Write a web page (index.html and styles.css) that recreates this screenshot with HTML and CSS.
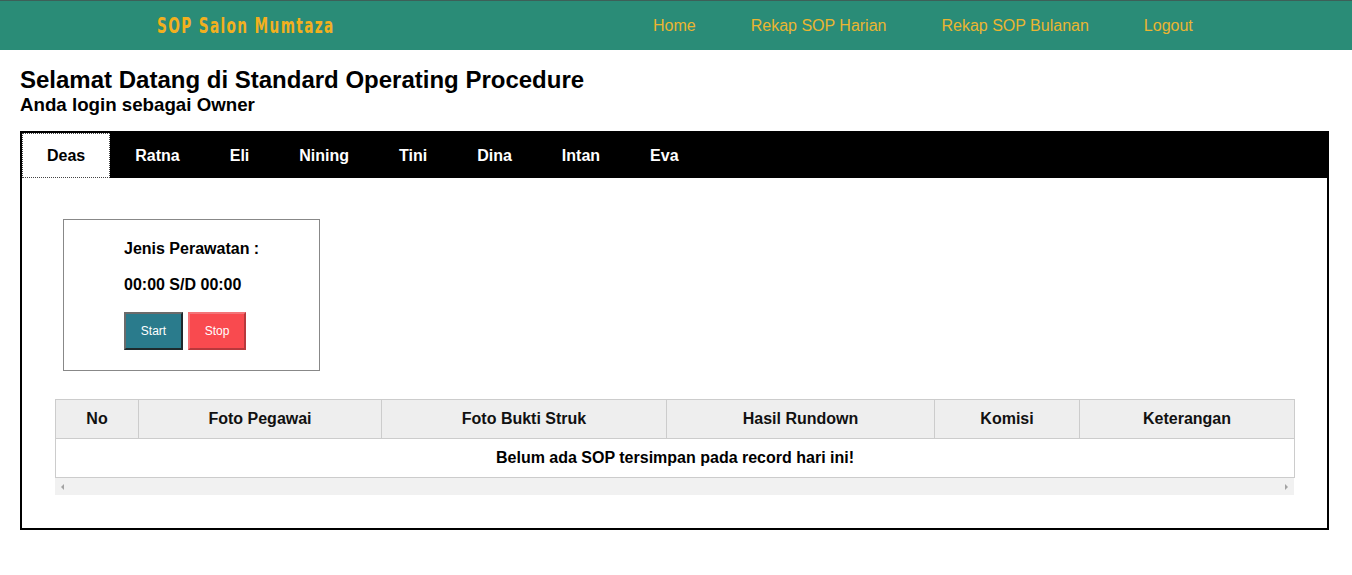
FILE: index.html
```html
<!DOCTYPE html>
<html>
<head>
<meta charset="utf-8">
<link rel="stylesheet" href="styles.css">
</head>
<body>
<header class="topbar">
  <div class="brand-slot"><span class="brand">SOP Salon Mumtaza</span></div>
  <nav class="nav">
    <a href="#">Home</a>
    <a href="#">Rekap SOP Harian</a>
    <a href="#">Rekap SOP Bulanan</a>
    <a href="#">Logout</a>
  </nav>
</header>
<main class="main">
  <h2 class="title">Selamat Datang di Standard Operating Procedure</h2>
  <h3 class="subtitle">Anda login sebagai Owner</h3>
  <section class="tabbox">
    <div class="tabs">
      <span class="tab active">Deas</span>
      <span class="tab">Ratna</span>
      <span class="tab">Eli</span>
      <span class="tab">Nining</span>
      <span class="tab">Tini</span>
      <span class="tab">Dina</span>
      <span class="tab">Intan</span>
      <span class="tab">Eva</span>
    </div>
    <div class="tabcontent">
      <div class="card">
        <p class="card-line">Jenis Perawatan :</p>
        <p class="card-line">00:00 S/D 00:00</p>
        <div class="buttons">
          <button class="btn btn-start">Start</button>
          <button class="btn btn-stop">Stop</button>
        </div>
      </div>
      <div class="tablewrap">
        <table class="sop">
          <thead>
            <tr>
              <th class="c1">No</th>
              <th class="c2">Foto Pegawai</th>
              <th class="c3">Foto Bukti Struk</th>
              <th class="c4">Hasil Rundown</th>
              <th class="c5">Komisi</th>
              <th class="c6">Keterangan</th>
            </tr>
          </thead>
          <tbody>
            <tr><td colspan="6">Belum ada SOP tersimpan pada record hari ini!</td></tr>
          </tbody>
        </table>
        <div class="hscroll">
          <span class="arrow left"></span>
          <span class="arrow right"></span>
        </div>
      </div>
    </div>
  </section>
</main>
</body>
</html>
```
FILE: styles.css
```css
* { box-sizing: border-box; }
html, body { margin: 0; padding: 0; background: #fff; }
body { font-family: "Liberation Sans", Arial, sans-serif; color: #000; }

.topbar {
  height: 50px;
  background: #2a8c77;
  border-top: 1px solid #3d5f58;
  display: flex;
  align-items: center;
  padding-left: 157px;
}
.brand-slot { width: 496px; }
.brand {
  display: inline-block;
  font-family: "DejaVu Sans Condensed", "DejaVu Sans", sans-serif;
  font-weight: bold;
  font-size: 22px;
  letter-spacing: 2px;
  color: #f2b01e;
  transform: scaleX(0.69);
  transform-origin: left center;
  white-space: nowrap;
}
.nav { display: flex; gap: 55px; }
.nav a {
  color: #ebb531;
  text-decoration: none;
  font-size: 16px;
}

.main { padding: 0 23px 0 20px; }
.title {
  margin: 16px 0 0;
  font-size: 24px;
  line-height: 28px;
  font-weight: bold;
}
.subtitle {
  margin: 0 0 16px;
  font-size: 18.72px;
  line-height: 21px;
  font-weight: bold;
}

.tabbox { border: 2px solid #000; }
.tabs {
  display: flex;
  background: #000;
  height: 45px;
}
.tab {
  display: flex;
  align-items: center;
  padding: 0 25px;
  color: #fff;
  font-weight: bold;
  font-size: 16px;
}
.tab.active {
  background: #fff;
  color: #000;
  border: 1px dotted #444;
  padding: 0 24px;
}

.tabcontent { padding: 41px 33px 33px; }
.card {
  margin-left: 8px;
  width: 257px;
  border: 1px solid #888;
  padding: 20px 0 20px 60px;
}
.card-line {
  margin: 0 0 18px;
  font-size: 16px;
  line-height: 18px;
  font-weight: bold;
}
.buttons { display: flex; gap: 5px; }
.btn {
  height: 38px;
  font-family: "Liberation Sans", Arial, sans-serif;
  font-size: 12px;
  color: #fff;
  padding: 0;
}
.btn-start {
  width: 59px;
  background: #2a7b8c;
  border: 2px solid;
  border-color: #6b6b6b #1e2a2d #1e2a2d #6b6b6b;
}
.btn-stop {
  width: 58px;
  background: #f94a4f;
  border: 2px solid;
  border-color: #f47478 #b8383c #b8383c #f47478;
}

.tablewrap { margin-top: 28px; width: 1239px; }
.sop {
  width: 100%;
  border-collapse: collapse;
  table-layout: fixed;
}
.sop th, .sop td {
  border: 1px solid #cccccc;
  height: 39px;
  text-align: center;
  font-size: 16px;
  font-weight: bold;
  padding: 0;
}
.sop th { background: #eeeeee; color: #111; }
.c1 { width: 83px; }
.c2 { width: 243px; }
.c3 { width: 285px; }
.c4 { width: 268px; }
.c5 { width: 145px; }
.c6 { width: 215px; }

.hscroll {
  height: 17px;
  background: #f1f1f1;
  display: flex;
  justify-content: space-between;
  align-items: center;
  padding: 0 6px;
}
.arrow { width: 0; height: 0; border-top: 3px solid transparent; border-bottom: 3px solid transparent; }
.arrow.left { border-right: 3px solid #a3a3a3; }
.arrow.right { border-left: 3px solid #a3a3a3; }
```
